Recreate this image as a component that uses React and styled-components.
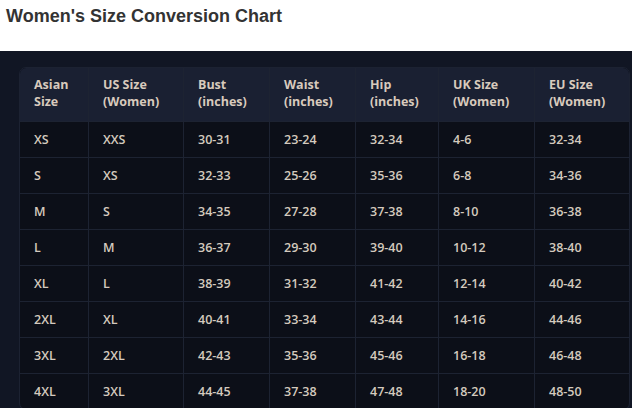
import React from "react";
import styled, { createGlobalStyle } from "styled-components";

const GlobalStyle = createGlobalStyle`
  body {
    margin: 0;
    background: #ffffff;
    font-family: "Liberation Sans", Arial, sans-serif;
  }
`;

const Title = styled.h1`
  margin: 0;
  height: 51px;
  padding: 6px 0 0 6px;
  box-sizing: border-box;
  font-size: 18px;
  font-weight: 700;
  line-height: 20px;
  color: #333333;
`;

const Panel = styled.section`
  background: #111624;
  padding: 16px 2px 12px 19px;
`;

const Table = styled.div`
  display: grid;
  grid-template-columns: 68px 95px 86px 86px 83px 96px 96px;
  border: 1px solid #1c2232;
  border-radius: 7px;
  overflow: hidden;
  background: #0c0f18;
  font-family: "Open Sans", "Noto Sans", sans-serif;
  font-size: 12.5px;
`;

const Cell = styled.div`
  display: flex;
  align-items: center;
  box-sizing: border-box;
  padding: ${(p) => (p.$head ? "0 14px 3px" : "0 14px 1px")};
  height: ${(p) => (p.$head ? "53px" : "36px")};
  background: ${(p) => (p.$head ? "#1a2032" : "transparent")};
  color: ${(p) => (p.$head ? "#d8cabd" : "#d4cabe")};
  font-weight: ${(p) => (p.$head ? 700 : 600)};
  line-height: 17px;
  border-left: ${(p) => (p.$first ? "none" : "1px solid #1d2332")};
  border-top: ${(p) => (p.$head ? "none" : "1px solid #1d2332")};
`;

const headers = [
  ["Asian", "Size"],
  ["US Size", "(Women)"],
  ["Bust", "(inches)"],
  ["Waist", "(inches)"],
  ["Hip", "(inches)"],
  ["UK Size", "(Women)"],
  ["EU Size", "(Women)"],
];

const rows = [
  ["XS", "XXS", "30-31", "23-24", "32-34", "4-6", "32-34"],
  ["S", "XS", "32-33", "25-26", "35-36", "6-8", "34-36"],
  ["M", "S", "34-35", "27-28", "37-38", "8-10", "36-38"],
  ["L", "M", "36-37", "29-30", "39-40", "10-12", "38-40"],
  ["XL", "L", "38-39", "31-32", "41-42", "12-14", "40-42"],
  ["2XL", "XL", "40-41", "33-34", "43-44", "14-16", "44-46"],
  ["3XL", "2XL", "42-43", "35-36", "45-46", "16-18", "46-48"],
  ["4XL", "3XL", "44-45", "37-38", "47-48", "18-20", "48-50"],
];

export default function App() {
  return (
    <>
      <GlobalStyle />
      <Title>Women's Size Conversion Chart</Title>
      <Panel>
        <Table>
          {headers.map((h, i) => (
            <Cell key={h[0]} $head $first={i === 0}>
              <span>
                {h[0]}
                <br />
                {h[1]}
              </span>
            </Cell>
          ))}
          {rows.map((r) =>
            r.map((v, i) => (
              <Cell key={r[0] + i} $first={i === 0}>
                {v}
              </Cell>
            ))
          )}
        </Table>
      </Panel>
    </>
  );
}
